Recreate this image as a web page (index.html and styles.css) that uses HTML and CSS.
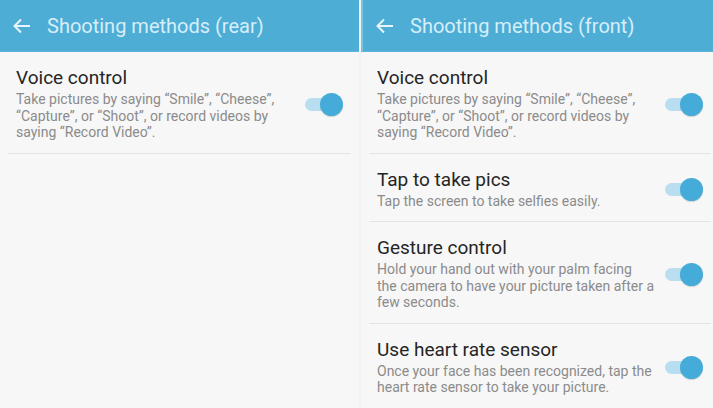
FILE: index.html
```html
<!DOCTYPE html>
<html>

<head>
	<title>Shooting methods</title>
	<link rel="stylesheet" href="styles.css">
</head>

<body>
	<div class="screens">

		<div class="screen screen-rear">
			<div class="app-bar">
				<svg class="back" width="18" height="16" viewBox="0 0 18 16"><path d="M17 8H2M8 1.5L1.5 8 8 14.5" fill="none" stroke="#e8f5fb" stroke-width="2"/></svg>
				<h2>Shooting methods (rear)</h2>
			</div>
			<div class="list">
				<div class="item">
					<div class="text">
						<div class="title">Voice control</div>
						<div class="desc">Take pictures by saying “Smile”, “Cheese”, “Capture”, or “Shoot”, or record videos by saying “Record Video”.</div>
					</div>
					<span class="switch"></span>
				</div>
			</div>
		</div>

		<div class="screen screen-front">
			<div class="app-bar">
				<svg class="back" width="18" height="16" viewBox="0 0 18 16"><path d="M17 8H2M8 1.5L1.5 8 8 14.5" fill="none" stroke="#e8f5fb" stroke-width="2"/></svg>
				<h2>Shooting methods (front)</h2>
			</div>
			<div class="list">
				<div class="item">
					<div class="text">
						<div class="title">Voice control</div>
						<div class="desc">Take pictures by saying “Smile”, “Cheese”, “Capture”, or “Shoot”, or record videos by saying “Record Video”.</div>
					</div>
					<span class="switch"></span>
				</div>
				<div class="item">
					<div class="text">
						<div class="title">Tap to take pics</div>
						<div class="desc">Tap the screen to take selfies easily.</div>
					</div>
					<span class="switch"></span>
				</div>
				<div class="item">
					<div class="text">
						<div class="title">Gesture control</div>
						<div class="desc">Hold your hand out with your palm facing the&nbsp;camera to have your picture taken after a few seconds.</div>
					</div>
					<span class="switch"></span>
				</div>
				<div class="item">
					<div class="text">
						<div class="title">Use heart rate sensor</div>
						<div class="desc">Once your face has been recognized, tap the heart rate sensor to take your picture.</div>
					</div>
					<span class="switch"></span>
				</div>
			</div>
		</div>

	</div>
</body>

</html>
```

FILE: styles.css
```css
body {
	margin: 0;
	padding: 0;
	background-color: #f7f7f7;
	font-family: Roboto, "Noto Sans", sans-serif;
	overflow: hidden;
}

.screens {
	display: flex;
	height: 408px;
}

.screen {
	background-color: #f7f7f7;
}

.screen-rear {
	width: 359px;
	border-right: 2px solid #eef3f6;
}

.screen-front {
	width: 352px;
}

.app-bar {
	display: flex;
	align-items: center;
	height: 51px;
	padding-left: 13px;
	background-color: #4eadd5;
	border-bottom: 1px solid #5fb6da;
}

.screen-front .app-bar {
	box-shadow: inset 2px 0 0 #7cc3e2;
	padding-left: 15px;
}

.back {
	margin-right: 16px;
}

.app-bar h2 {
	margin: 0;
	font-size: 20px;
	font-weight: normal;
	color: #d6eef9;
}

.item {
	display: flex;
	align-items: center;
	margin: 0 8px;
	padding: 14px 8px 12px;
	border-bottom: 1px solid #e3e3e3;
}

.screen-front .item {
	margin-right: 2px;
}

.text {
	flex: 1;
}

.title {
	font-size: 19px;
	color: #252525;
	line-height: 24px;
}

.desc {
	font-size: 14px;
	color: #8b8b8b;
	line-height: 16.5px;
	margin-top: 1px;
	padding-right: 8px;
}

.switch {
	position: relative;
	width: 38px;
	height: 23px;
	margin-top: 2px;
}

.switch::before {
	content: "";
	position: absolute;
	left: 0;
	top: 5px;
	width: 30px;
	height: 13px;
	border-radius: 7px;
	background-color: #b8def0;
}

.switch::after {
	content: "";
	position: absolute;
	right: 0;
	top: 0;
	width: 23px;
	height: 23px;
	border-radius: 50%;
	background-color: #45acda;
	box-shadow: 0 1px 1px rgba(0, 0, 0, 0.15);
}
```
